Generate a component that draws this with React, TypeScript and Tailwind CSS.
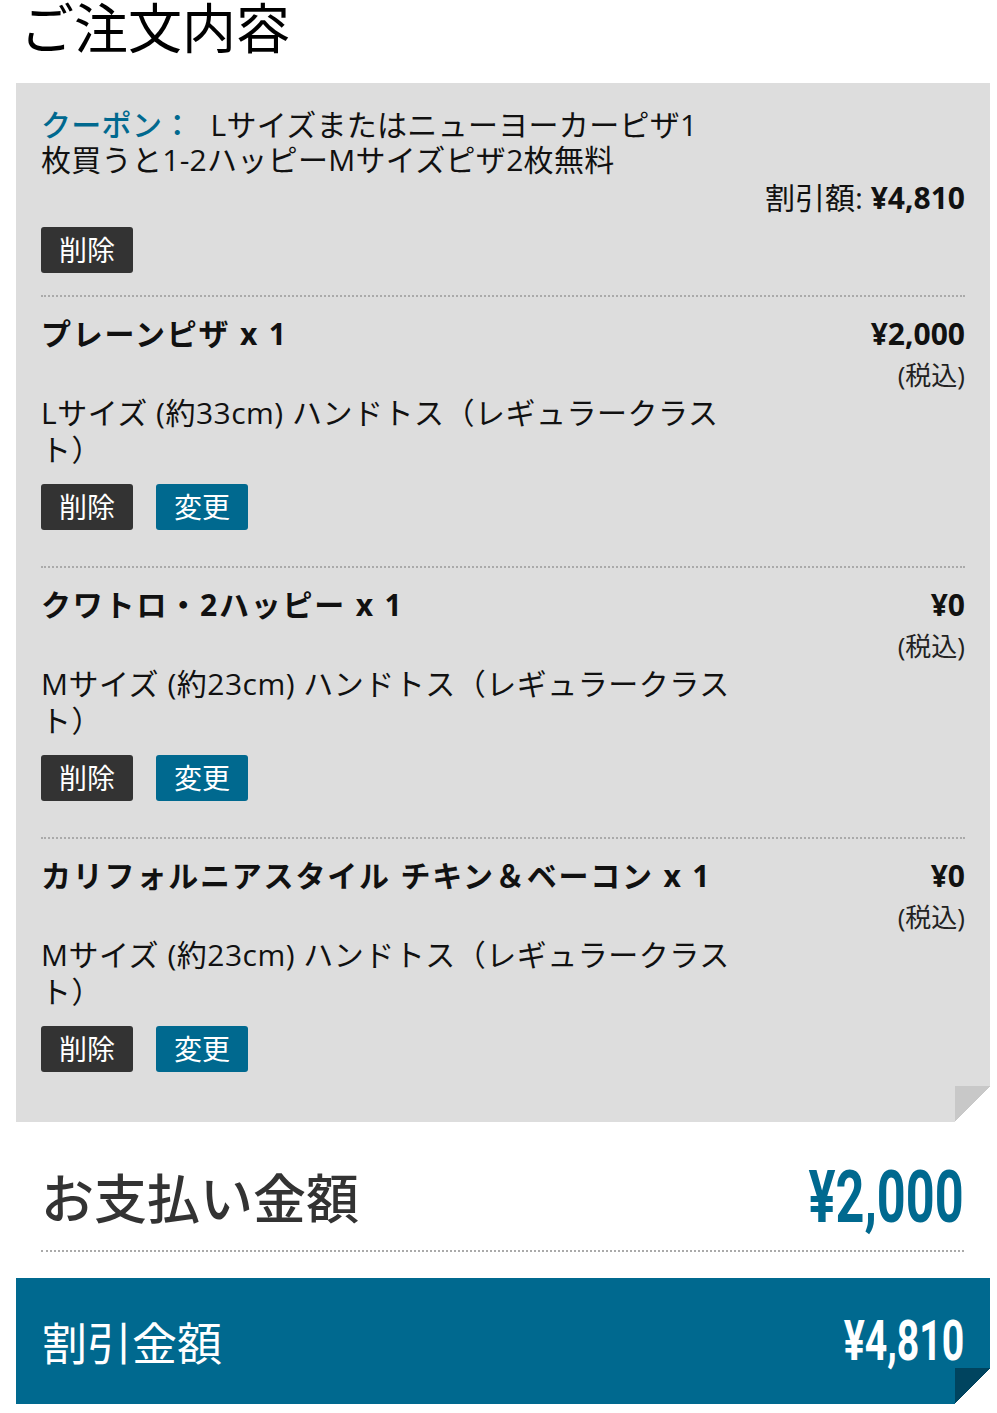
import React from "react";

type Item = {
  name: string;
  price: string;
  desc: string;
};

const items: Item[] = [
  {
    name: "プレーンピザ x 1",
    price: "¥2,000",
    desc: "Lサイズ (約33cm) ハンドトス（レギュラークラスト）",
  },
  {
    name: "クワトロ・2ハッピー x 1",
    price: "¥0",
    desc: "Mサイズ (約23cm) ハンドトス（レギュラークラスト）",
  },
  {
    name: "カリフォルニアスタイル チキン＆ベーコン x 1",
    price: "¥0",
    desc: "Mサイズ (約23cm) ハンドトス（レギュラークラスト）",
  },
];

function DeleteButton() {
  return (
    <button
      type="button"
      className="w-[92px] h-[46px] rounded-[3px] bg-[#333333] text-white text-[28px] leading-none"
    >
      削除
    </button>
  );
}

function ChangeButton() {
  return (
    <button
      type="button"
      className="w-[92px] h-[46px] rounded-[3px] bg-[#00698f] text-white text-[28px] leading-none"
    >
      変更
    </button>
  );
}

function OrderItem({ item, last }: { item: Item; last: boolean }) {
  return (
    <div
      className={`flex justify-between pt-[19px] ${
        last ? "pb-[50px]" : "pb-[36px] border-b-2 border-dotted border-[#aaaaaa]"
      }`}
    >
      <div className="flex flex-col">
        <div className="text-[30px] leading-[35px] font-bold tracking-[1.8px] text-[#111] whitespace-nowrap">
          {item.name}
        </div>
        <p className="mt-[43px] w-[700px] text-[30px] leading-[37px] tracking-[0.5px] text-[#111]">
          {item.desc}
        </p>
        <div className="mt-[16px] flex gap-[23px]">
          <DeleteButton />
          <ChangeButton />
        </div>
      </div>
      <div className="flex flex-col items-end">
        <div className="text-[30px] leading-[35px] font-bold text-[#111]">
          {item.price}
        </div>
        <div className="mt-[7px] text-[26px] leading-[35px] text-[#222]">(税込)</div>
      </div>
    </div>
  );
}

export default function App() {
  return (
    <div className="w-[997px] min-h-[1413px] bg-white font-['Open_Sans','Noto_Sans_CJK_JP',sans-serif] overflow-hidden">
      <h1 className="pl-5 -mt-[7px] text-[54px] leading-[70px] font-normal text-black">
        ご注文内容
      </h1>

      <div className="relative ml-4 mt-[20px] w-[974px] bg-[#dddddd] px-[25px] pt-[24px]">
        <div className="border-b-2 border-dotted border-[#aaaaaa] pb-[22px]">
          <p className="w-[665px] text-[30px] leading-[35px] tracking-[0.3px] text-[#111]">
            <span className="font-medium text-[#00698f]">クーポン：</span>
            <span className="ml-[18px]">
              Lサイズまたはニューヨーカーピザ1枚買うと1-2ハッピーMサイズピザ2枚無料
            </span>
          </p>
          <div className="mt-[3px] text-right text-[30px] leading-[35px] text-[#111]">
            割引額: <span className="font-bold">¥4,810</span>
          </div>
          <div className="mt-[12px]">
            <DeleteButton />
          </div>
        </div>

        {items.map((item, i) => (
          <OrderItem key={i} item={item} last={i === items.length - 1} />
        ))}

        <div className="absolute right-0 bottom-0 w-[35px] h-[36px] bg-[linear-gradient(135deg,#c8c8c8_50%,#ffffff_50%)]" />
      </div>

      <div className="ml-[41px] mr-[33px] h-[130px] pt-[24px] flex items-center justify-between border-b-2 border-dotted border-[#aaaaaa]">
        <div className="text-[53px] leading-none font-medium text-[#333333]">お支払い金額</div>
        <div className="inline-block origin-right scale-x-[0.7] font-['Roboto',sans-serif] font-bold text-[72px] leading-none text-[#00698f]">
          ¥2,000
        </div>
      </div>

      <div className="relative ml-4 mt-[26px] w-[974px] h-[126px] bg-[#00698f] px-[26px] flex items-center justify-between">
        <div className="mt-[4px] text-[45px] leading-none text-white">割引金額</div>
        <div className="inline-block origin-right scale-x-[0.7] font-['Roboto',sans-serif] font-bold text-[56px] leading-none text-white">
          ¥4,810
        </div>
        <div className="absolute right-0 bottom-0 w-[35px] h-[36px] bg-[linear-gradient(135deg,#00445f_50%,#ffffff_50%)]" />
      </div>
    </div>
  );
}
